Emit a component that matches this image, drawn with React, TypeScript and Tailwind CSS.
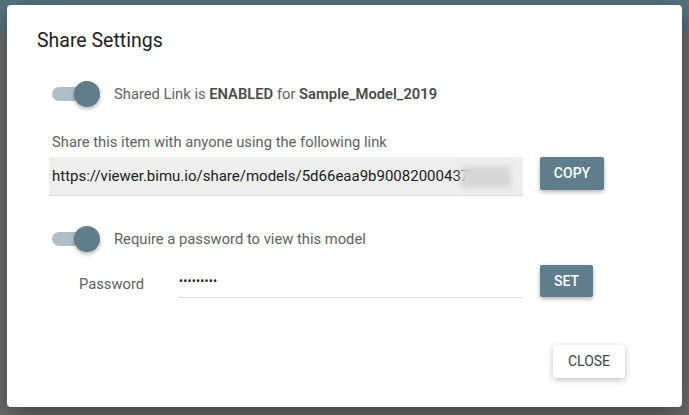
import React from 'react';

const font = { fontFamily: 'Roboto, "Noto Sans", sans-serif' };

function Toggle() {
  return (
    <div className="relative h-[28px] w-[48px] shrink-0">
      <div className="absolute left-0 top-[7px] h-[14px] w-[42px] rounded-full bg-[#b0bec5]" />
      <div className="absolute left-[22px] top-[1px] h-[26px] w-[26px] rounded-full bg-[#607d8b] shadow-[0_2px_4px_rgba(0,0,0,0.3)]" />
    </div>
  );
}

export default function App() {
  return (
    <div className="relative h-[415px] w-[689px] overflow-hidden bg-[#6b6b6b]" style={font}>
      <div className="h-[33px] bg-[#54727e]" />

      <div className="absolute left-[7px] top-[5px] h-[402px] w-[675px] rounded-[4px] bg-white shadow-[0_8px_24px_rgba(0,0,0,0.35)]">
        <div className="flex h-full flex-col pl-[30px] pr-[30px] pt-[24px]">
          <h2 className="h-6 text-[19.5px] font-normal leading-6 text-[#212121]">Share Settings</h2>

          <div className="mt-[27px] flex items-center gap-[14px] pl-[15px]">
            <Toggle />
            <p className="text-[14.75px] text-[#616161]">
              Shared Link is <b className="font-semibold text-[#4a4a4a]">ENABLED</b> for{' '}
              <b className="font-semibold text-[#4a4a4a]">Sample_Model_2019</b>
            </p>
          </div>

          <p className="mt-[22px] pl-[15px] text-[14.75px] leading-6 text-[#616161]">
            Share this item with anyone using the following link
          </p>

          <div className="mt-[3px] flex items-start pl-[12px]">
            <div className="relative flex h-[39px] w-[474px] items-center border-b border-[#dcdcdc] bg-[#eeeeee] pl-[3px]">
              <span className="whitespace-nowrap text-[15px] text-[#212121]">
                https://viewer.bimu.io/share/models/5d66eaa9b90082000437
              </span>
              <div className="absolute left-[412px] top-[9px] h-[22px] w-[50px] bg-[#d6d6d6] blur-[3px]" />
            </div>
            <button className="ml-[17px] h-[33px] w-[64px] rounded-[2px] bg-[#607d8b] text-[14px] font-medium text-white shadow-[0_2px_4px_rgba(0,0,0,0.3)]">
              COPY
            </button>
          </div>

          <div className="mt-[29px] flex items-center gap-[14px] pl-[15px]">
            <Toggle />
            <p className="text-[14.75px] text-[#616161]">Require a password to view this model</p>
          </div>

          <div className="mt-[12px] flex items-start">
            <div className="flex items-start pl-[42px]">
              <span className="mt-[8px] w-[99px] text-[14.75px] text-[#616161]">Password</span>
              <div className="flex h-[33px] w-[344px] items-center border-b border-[#dcdcdc] pl-[1px]">
                <span className="text-[12px] tracking-[0.2px] text-[#212121]">•••••••••</span>
              </div>
            </div>
            <button className="ml-[18px] h-[32px] w-[53px] rounded-[2px] bg-[#607d8b] text-[14px] font-medium text-white shadow-[0_2px_4px_rgba(0,0,0,0.3)]">
              SET
            </button>
          </div>

          <div className="mt-[47px] flex justify-end pr-[27px]">
            <button className="h-[33px] w-[72px] rounded-[2px] bg-white text-[14px] text-[#424242] shadow-[0_2px_6px_rgba(0,0,0,0.25)]">
              CLOSE
            </button>
          </div>
        </div>
      </div>
    </div>
  );
}
